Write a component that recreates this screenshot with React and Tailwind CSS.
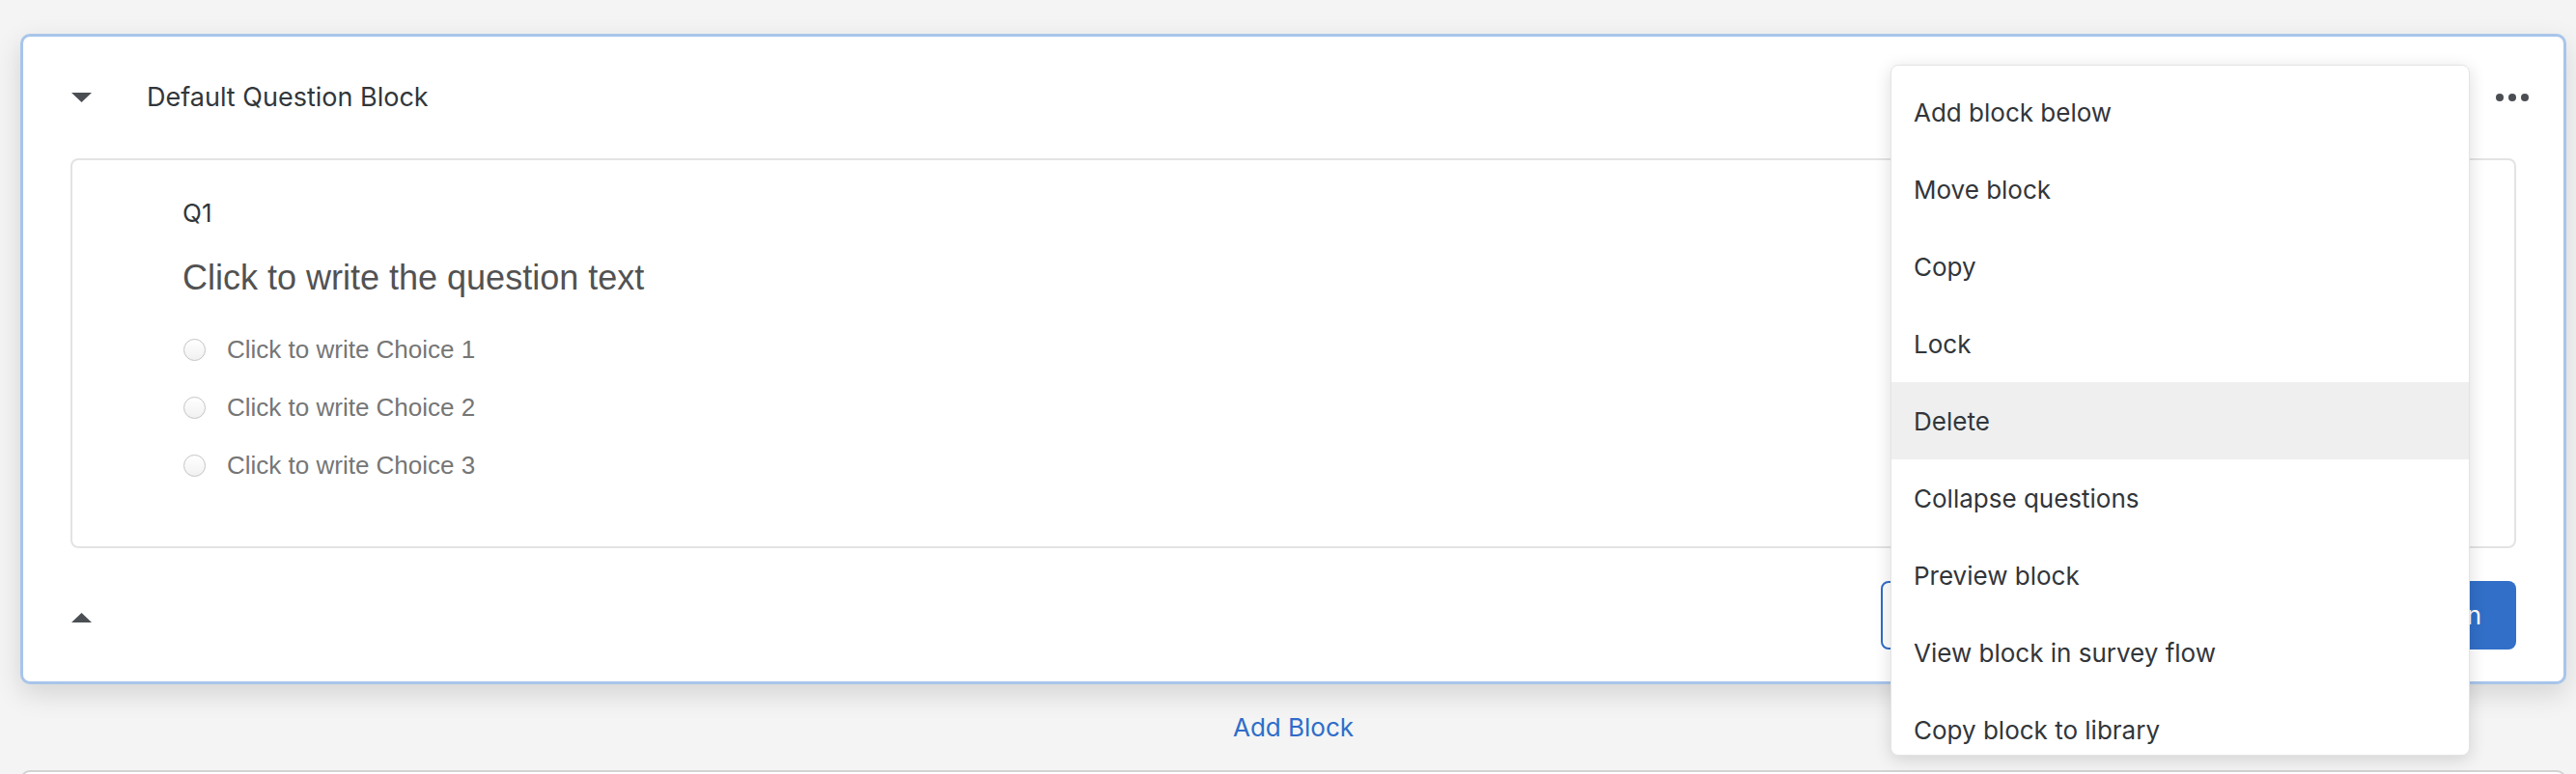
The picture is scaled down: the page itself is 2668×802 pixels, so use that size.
import React from "react";

const choices = ["Click to write Choice 1", "Click to write Choice 2", "Click to write Choice 3"];

const menuItems = [
  "Add block below",
  "Move block",
  "Copy",
  "Lock",
  "Delete",
  "Collapse questions",
  "Preview block",
  "View block in survey flow",
  "Copy block to library",
];

const ui = { fontFamily: "Inter, Roboto, 'Liberation Sans', sans-serif" };
const arial = { fontFamily: "'Liberation Sans', Arial, sans-serif" };

const Caret = ({ up }) => (
  <svg width="21" height="10" viewBox="0 0 21 10" className="block">
    {up ? (
      <polygon points="0,10 10.5,0 21,10" fill="#4b4f54" />
    ) : (
      <polygon points="0,0 21,0 10.5,10" fill="#4b4f54" />
    )}
  </svg>
);

const BlockMenu = () => (
  <div
    className="absolute left-[1958px] top-[67px] w-[600px] h-[716px] overflow-hidden rounded-[8px] border border-[#e4e4e4] bg-white pt-[8px] shadow-[0_4px_18px_rgba(0,0,0,0.14)] z-50"
    style={ui}
  >
    {menuItems.map((item) => (
      <div
        key={item}
        className={`h-[80px] flex items-center px-[23px] text-[26px] text-[#32363a] ${
          item === "Delete" ? "bg-[#efefef]" : ""
        }`}
      >
        {item}
      </div>
    ))}
  </div>
);

export default function App() {
  return (
    <div className="relative min-h-screen bg-[#f4f4f4] pt-[35px] pl-[21px]">
      <div className="w-[2637px] rounded-[10px] border-[3px] border-[#a8c5ea] bg-white shadow-[0_10px_28px_rgba(0,0,0,0.13)]">
        {/* header */}
        <div className="h-[126px] flex items-center pl-[50px] pr-[36px]" style={ui}>
          <Caret />
          <span className="ml-[57px] text-[27px] text-[#32363a]">Default Question Block</span>
          <div className="ml-auto flex items-center gap-[5px]">
            <span className="w-[8px] h-[8px] rounded-full bg-[#4b4f54]" />
            <span className="w-[8px] h-[8px] rounded-full bg-[#4b4f54]" />
            <span className="w-[8px] h-[8px] rounded-full bg-[#4b4f54]" />
          </div>
        </div>

        {/* question */}
        <div className="mx-[49px] h-[404px] rounded-[8px] border-2 border-[#e3e3e3] pt-[40px] pl-[114px]">
          <div className="h-[30px] leading-[30px] text-[26px] text-[#32363a]" style={ui}>
            Q1
          </div>
          <div className="mt-[30px] h-[44px] leading-[44px] text-[36px] text-[#525252]" style={arial}>
            Click to write the question text
          </div>
          <div className="mt-[22px]">
            {choices.map((c) => (
              <div key={c} className="h-[60px] flex items-center pl-[1px]">
                <span className="w-[23px] h-[23px] rounded-full border border-[#c4c4c4] bg-gradient-to-b from-white to-[#f1f1f1]" />
                <span className="ml-[22px] text-[26px] text-[#767676]" style={arial}>
                  {c}
                </span>
              </div>
            ))}
          </div>
        </div>

        {/* footer */}
        <div className="h-[138px] flex items-center pl-[50px] pr-[49px]" style={ui}>
          <div className="mt-[6px]">
            <Caret up />
          </div>
          <div className="ml-auto w-[658px] flex items-center gap-[16px]">
            <button className="flex-1 h-[71px] rounded-[8px] border-2 border-[#2f6dc9] bg-white text-[26px] text-[#2f6dc9]">
              Import from library
            </button>
            <button className="h-[71px] px-[36px] rounded-[8px] bg-[#316fc8] text-[26px] text-white">
              Add new question
            </button>
          </div>
        </div>
      </div>

      <div className="w-[2637px] h-[89px] flex items-center justify-center" style={ui}>
        <span className="text-[26px] text-[#2f6dc9]">Add Block</span>
      </div>

      <div className="w-[2637px] h-[120px] rounded-[10px] border-2 border-[#d2d2d2] bg-white" />

      <BlockMenu />
    </div>
  );
}
